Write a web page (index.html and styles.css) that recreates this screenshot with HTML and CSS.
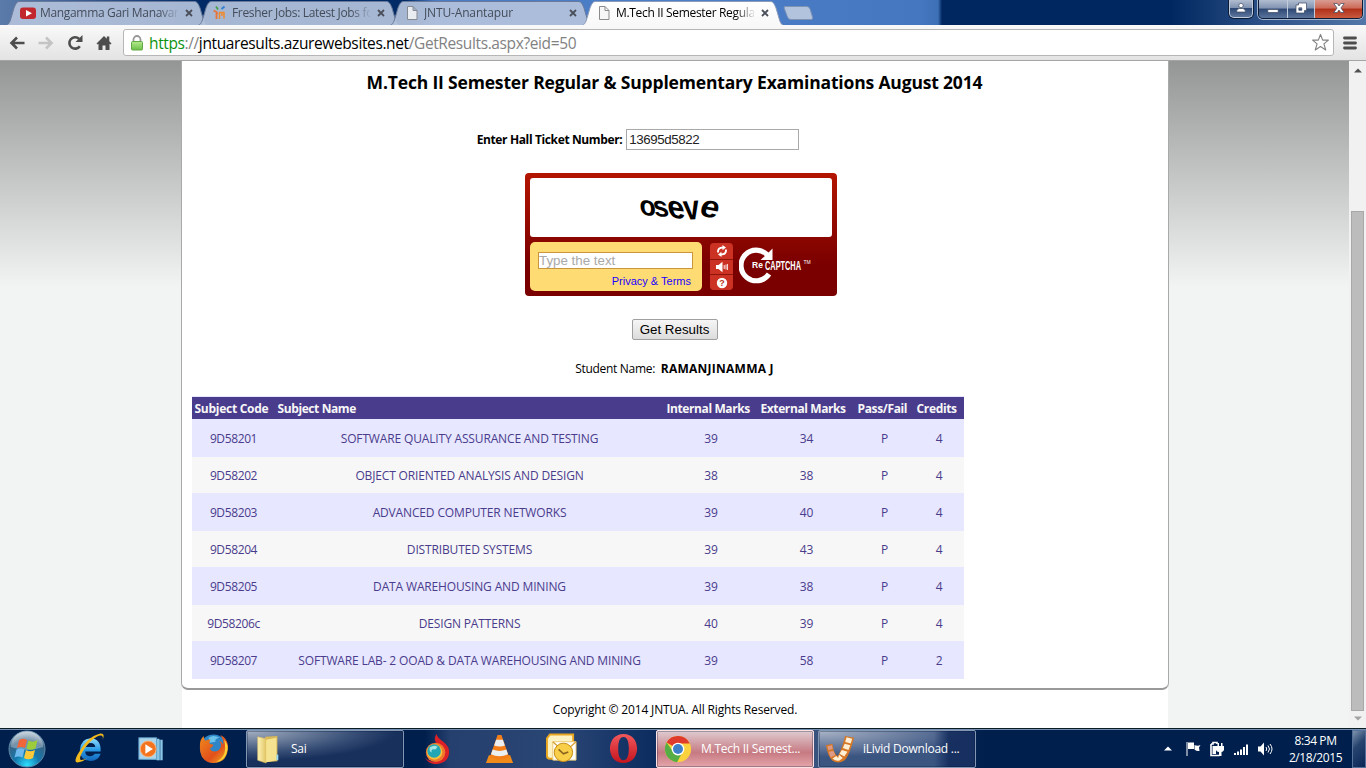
FILE: index.html
```
<!DOCTYPE html>
<html lang="en">
<head>
<meta charset="utf-8">
<title>M.Tech II Semester Regular &amp; Supplementary Examinations August 2014</title>
<link rel="stylesheet" href="styles.css">
</head>
<body>
<svg width="0" height="0" class="defs">
  <defs>
    <linearGradient id="tabOn" x1="0" y1="0" x2="0" y2="1"><stop offset="0" stop-color="#fff"/><stop offset="1" stop-color="#f8f8f8"/></linearGradient>
    <linearGradient id="lockG" x1="0" y1="0" x2="0" y2="1"><stop offset="0" stop-color="#b5ea8c"/><stop offset="1" stop-color="#6cc04a"/></linearGradient>
    <radialGradient id="orb" cx=".5" cy=".95" r=".9"><stop offset="0" stop-color="#2ee0ff"/><stop offset=".4" stop-color="#1377ad"/><stop offset=".75" stop-color="#3a6484"/><stop offset="1" stop-color="#a9bccb"/></radialGradient>
    <linearGradient id="blueE" x1="0" y1="0" x2="0" y2="1"><stop offset="0" stop-color="#8fdcfb"/><stop offset=".5" stop-color="#2b9be6"/><stop offset="1" stop-color="#1266bb"/></linearGradient>
    <linearGradient id="fold" x1="0" y1="0" x2="1" y2="0"><stop offset="0" stop-color="#fdf3b4"/><stop offset="1" stop-color="#e2c566"/></linearGradient>
    <linearGradient id="fox" x1="0" y1="0" x2="1" y2="1"><stop offset="0" stop-color="#f08a1d"/><stop offset=".6" stop-color="#e2501b"/><stop offset="1" stop-color="#f6b521"/></linearGradient>
    <linearGradient id="op" x1="0" y1="0" x2="0" y2="1"><stop offset="0" stop-color="#f0585c"/><stop offset="1" stop-color="#c5141d"/></linearGradient>
  </defs>
</svg>

<header class="tabstrip">
  <div class="tab">
    <svg class="tab-shape" viewBox="0 0 201 25"><path d="M0.5 25C4 24 4 21 8 8C10 3 11 1.500 14 1.500H188C191 1.500 192 3 194 8C198 21 198 24 201 25"/></svg>
    <svg class="fav" viewBox="0 0 16 16"><rect y="2.500" width="16" height="11.500" rx="3" fill="#c1272d"/><path d="M6 5l6 3.200L6 11.500z" fill="#fff"/></svg>
    <span class="tab-title">Mangamma Gari Manavar</span>
    <svg class="tab-x" viewBox="0 0 8 8"><path d="M1 1l6 6M7 1L1 7"/></svg>
  </div>
  <div class="tab">
    <svg class="tab-shape" viewBox="0 0 201 25"><path d="M0.5 25C4 24 4 21 8 8C10 3 11 1.500 14 1.500H188C191 1.500 192 3 194 8C198 21 198 24 201 25"/></svg>
    <svg class="fav" viewBox="0 0 16 16" fill="none" stroke-width="1.800"><path d="M1.500 5.500l3 1.500v7M5 8.500l1-.5" stroke="#e8743b"/><path d="M4 1.500l2 3" stroke="#4aa14a"/><path d="M7 7.500h5v6M7.500 7v7M10 7v4" stroke="#f08b2d" stroke-width="1.500"/><path d="M9.500 4l3-2.500" stroke="#2f7fd0"/></svg>
    <span class="tab-title">Fresher Jobs: Latest Jobs fo</span>
    <svg class="tab-x" viewBox="0 0 8 8"><path d="M1 1l6 6M7 1L1 7"/></svg>
  </div>
  <div class="tab">
    <svg class="tab-shape" viewBox="0 0 201 25"><path d="M0.5 25C4 24 4 21 8 8C10 3 11 1.500 14 1.500H188C191 1.500 192 3 194 8C198 21 198 24 201 25"/></svg>
    <svg class="fav" viewBox="0 0 16 16"><path d="M3.500 1.500h5.500l4 4v9H3.500zM9 1.500v4h4" fill="#e9ecf1" stroke="#868b93"/></svg>
    <span class="tab-title t-wide">JNTU-Anantapur</span>
    <svg class="tab-x" viewBox="0 0 8 8"><path d="M1 1l6 6M7 1L1 7"/></svg>
  </div>
  <div class="tab tab-on">
    <svg class="tab-shape" viewBox="0 0 201 25"><path d="M0.5 25C4 24 4 21 8 8C10 3 11 1.500 14 1.500H188C191 1.500 192 3 194 8C198 21 198 24 201 25"/></svg>
    <svg class="fav" viewBox="0 0 16 16"><path d="M3.500 1.500h5.500l4 4v9H3.500zM9 1.500v4h4" fill="#f6f6f6" stroke="#8b8b8b"/></svg>
    <span class="tab-title">M.Tech II Semester Regula</span>
    <svg class="tab-x" viewBox="0 0 8 8"><path d="M1 1l6 6M7 1L1 7"/></svg>
  </div>
  <svg class="newtab" viewBox="0 0 32 16"><path d="M3 1.500h22q2 0 3 2.500l2.500 8q.7 2.500-1.500 2.500H9q-2.500 0-3.500-2.500L2.500 4q-1-2.500.5-2.500z" fill="#b2c3de" stroke="#7f93b5"/></svg>
  <div class="win">
    <span class="wbtn wuser"><svg viewBox="0 0 12 12"><circle cx="6" cy="3.500" r="2.200"/><path d="M1.500 10q0-3.500 3-3.500h3q3 0 3 3.500z"/></svg></span>
    <div class="wgroup">
      <span class="wbtn wmin"><svg viewBox="0 0 12 12"><path d="M.8 7.500h10.400v3H.8z"/></svg></span>
      <span class="wbtn wmax"><svg viewBox="0 0 12 12"><path fill-rule="evenodd" d="M3.500 1h8v7.500h-2V11H1V3h2.500zM3.800 5.800v2.500h3V5.800z"/></svg></span>
      <span class="wbtn wclose"><svg viewBox="0 0 12 12"><path d="M.8 1.500h3.400L6 4l1.800-2.500h3.400L7.900 6l3.300 4.500H7.800L6 8l-1.800 2.500H.8L4.100 6z"/></svg></span>
    </div>
  </div>
</header>

<nav class="toolbar">
  <svg class="nav-i" viewBox="0 0 16 16"><path d="M8 2.500L2.500 8 8 13.500M3 8h12.500" fill="none" stroke="#4d4d4d" stroke-width="2.600"/></svg>
  <svg class="nav-i" viewBox="0 0 16 16"><path d="M8 2.500L13.500 8 8 13.500M13 8H.5" fill="none" stroke="#c4c4c4" stroke-width="2.600"/></svg>
  <svg class="nav-i" viewBox="0 0 16 16"><path d="M12.800 11.200A5.700 5.700 0 1 1 12 3.800" fill="none" stroke="#4d4d4d" stroke-width="2.600"/><path d="M15.500 0v7H8.500z" fill="#4d4d4d"/></svg>
  <svg class="nav-i" viewBox="0 0 16 16"><path d="M8 1l2.800 2.800V1.500h2.500v4.800L15.500 8.500l-1 1L13.500 8.700V15H9.500v-4.500h-3V15h-4V8.700l-1 .8-1-1z" fill="#4d4d4d"/></svg>
  <div class="omni">
    <svg class="lock" viewBox="0 0 12 16"><path d="M2.500 7V4.500a3.500 3.500 0 0 1 7 0V7" fill="none" stroke="#989898" stroke-width="1.800"/><rect x=".5" y="6.500" width="11" height="8.500" rx="1" fill="url(#lockG)" stroke="#63a847"/></svg>
    <span class="url"><span class="u-s">https</span><span class="u-g">://</span><span class="u-h">jntuaresults.azurewebsites.net</span><span class="u-g">/GetResults.aspx?eid=50</span></span>
    <svg class="star" viewBox="0 0 20 20"><path d="M10 1.500l2.300 6h6l-4.700 4 1.900 6.300L10 14.300l-5.500 3.500 1.900-6.300-4.700-4h6z" fill="#fff" stroke="#828282" stroke-width="1.200" stroke-linejoin="round"/></svg>
  </div>
  <svg class="menu" viewBox="0 0 14 14"><path d="M1.500 2h11M1.500 7h11M1.500 12h11" stroke="#4d4d4d" stroke-width="2.800" stroke-linecap="round"/></svg>
</nav>

<div class="view">
  <main class="page">
    <section class="card">
      <h1>M.Tech II Semester Regular &amp; Supplementary Examinations August 2014</h1>
      <form class="form">
        <div class="ticket"><label for="ht">Enter Hall Ticket Number:</label><input id="ht" type="text" value="13695d5822"></div>
        <div class="captcha">
          <div class="cap-img">
            <svg width="96" height="40" viewBox="0 0 96 40"><g class="cap-word"><text transform="translate(7 26) rotate(10) skewX(14) scale(1.050 1.050)">o</text><text transform="translate(22 28) rotate(4) skewX(16) scale(1.050 1.100)">s</text><text transform="translate(36 29) rotate(8) skewX(18) scale(1.200 1.200)">e</text><text transform="translate(52 32) rotate(-4) skewX(4) scale(1.100 1.350)">v</text><text transform="translate(65 27) rotate(12) skewX(-6) scale(1.300 1.200)">e</text></g></svg>
          </div>
          <div class="cap-row">
            <div class="cap-box"><input type="text" placeholder="Type the text"><a>Privacy &amp; Terms</a></div>
            <div class="cap-btns">
              <span><svg viewBox="0 0 12 12" fill="none" stroke="#fff" stroke-width="1.900"><path d="M2 7.500Q1.500 2.500 7 2.500M10 4.500Q10.500 9.500 5 9.500"/><path d="M6.500 0v5.200L10 2.500zM5.500 6.800V12L2 9.500z" fill="#fff" stroke="none"/></svg></span>
              <span><svg viewBox="0 0 12 12"><path d="M0 4h2.500L6.500.8v10.400L2.500 8H0z" fill="#fff"/><path d="M8.200 4v4M10 3.500v5M11.600 3v6" stroke="#fff" stroke-width=".9"/></svg></span>
              <span><svg viewBox="0 0 12 12"><circle cx="6" cy="6" r="5.200" fill="#fff"/><text x="6" y="9.300" class="q">?</text></svg></span>
            </div>
            <svg class="cap-logo" viewBox="0 0 74 38"><path d="M28.500 9A15.300 15.300 0 1 0 30 28" fill="none" stroke="#fff" stroke-width="5.200"/><path d="M33.500 2.500v11.500H21.500L27 9z" fill="#fff"/><text x="13" y="22" class="re">Re</text><text x="26" y="24" class="cp" textLength="36" lengthAdjust="spacingAndGlyphs">CAPTCHA</text><text x="64.500" y="18" class="tm">TM</text></svg>
          </div>
        </div>
        <button type="button" class="get">Get Results</button>
      </form>
      <p class="student">Student Name: <b>RAMANJINAMMA J</b></p>
      <table class="marks">
        <colgroup><col class="c1"><col class="c2"><col class="c3"><col class="c4"><col class="c5"><col class="c6"></colgroup>
        <thead><tr><th>Subject Code</th><th>Subject Name</th><th>Internal Marks</th><th>External Marks</th><th>Pass/Fail</th><th>Credits</th></tr></thead>
        <tbody>
          <tr><td>9D58201</td><td>SOFTWARE QUALITY ASSURANCE AND TESTING</td><td>39</td><td>34</td><td>P</td><td>4</td></tr>
          <tr><td>9D58202</td><td>OBJECT ORIENTED ANALYSIS AND DESIGN</td><td>38</td><td>38</td><td>P</td><td>4</td></tr>
          <tr><td>9D58203</td><td>ADVANCED COMPUTER NETWORKS</td><td>39</td><td>40</td><td>P</td><td>4</td></tr>
          <tr><td>9D58204</td><td>DISTRIBUTED SYSTEMS</td><td>39</td><td>43</td><td>P</td><td>4</td></tr>
          <tr><td>9D58205</td><td>DATA WAREHOUSING AND MINING</td><td>39</td><td>38</td><td>P</td><td>4</td></tr>
          <tr><td>9D58206c</td><td>DESIGN PATTERNS</td><td>40</td><td>39</td><td>P</td><td>4</td></tr>
          <tr><td>9D58207</td><td>SOFTWARE LAB- 2 OOAD &amp; DATA WAREHOUSING AND MINING</td><td>39</td><td>58</td><td>P</td><td>2</td></tr>
        </tbody>
      </table>
    </section>
    <footer class="copy">Copyright © 2014 JNTUA. All Rights Reserved.</footer>
  </main>
  <div class="scroll">
    <svg viewBox="0 0 8 5"><path d="M0 4.500L4 .5l4 4z" fill="#505050"/></svg>
    <div class="thumb"></div>
    <svg viewBox="0 0 8 5"><path d="M0 .5h8l-4 4z" fill="#a3a3a3"/></svg>
  </div>
</div>

<footer class="taskbar">
  <div class="pin p-start"><svg viewBox="0 0 38 38"><circle cx="19" cy="19" r="18" fill="url(#orb)" stroke="#5d89a8"/><path d="M3 17A16 16 0 0 1 35 17Q19 23 3 17z" fill="#fff" opacity=".3"/><path d="M11 10q4-2.500 8 0l-2 8q-4-2-8 0z" fill="#f0653a"/><path d="M20.500 10.500q4 2.500 9-.5l-2 8.500q-5 2.500-9 0z" fill="#9ccb3b"/><path d="M8.500 19.500q4-2 8 0l-2 8q-4-2-8 0z" fill="#6fb9ee"/><path d="M18 20q4 2.500 9 0l-2 8q-5 2.500-9 0z" fill="#fdc938"/></svg></div>
  <div class="pin p-ie"><svg viewBox="0 0 32 32"><path d="M27.500 19H11.500Q12 24 17 24q3 0 4.500-2.500h6Q25 29 17 29 6 28 6 17.500 7 6 17 5.500 28 6 27.500 19zM11.700 14.500H22Q21.500 10.500 17 10.300 12.500 10.500 11.700 14.500z" fill="url(#blueE)"/><path d="M7 17C0 27 0 32 6 30q4-1 8-4.500C6 30 4 28 9 19 15 9 25 1 29 3q2 1.500-.5 6C32 3 31 0 26.500.7 18 2.500 11 10 7 17z" fill="#f2b91d"/></svg></div>
  <div class="pin p-wmp"><svg viewBox="0 0 30 30"><path d="M5 4l20 1v22l-20-1z" fill="#4d97c4"/><path d="M21 4h3v23h-3zM25 5h2.500v22H25z" fill="#8cc6e6"/><rect x="2" y="3" width="19" height="23" fill="#a9d4ec" stroke="#5fa0c8"/><circle cx="12" cy="15" r="8.500" fill="#f4731e" stroke="#fbb279"/><path d="M9 10l8 5-8 5z" fill="#fff"/></svg></div>
  <div class="pin p-ff"><svg viewBox="0 0 32 32"><circle cx="16" cy="15.500" r="14" fill="#2e86c8"/><path d="M11 5q5-4 11 0-5 1-4 4l-6 1z" fill="#6bc3ec"/><path d="M2 12Q2 6 6 3q0 4 2 5 3-2 5-1-2 2-1 4l4 1q-1 3-4 4 3 5 9 2 5-4 1-10 3 1 4 4 1-5-3-10 7 3 8 11 0 18-15 18Q1 30 2 12z" fill="url(#fox)"/><path d="M27 7q4 4 3.500 10Q29 28 19 30q9-5 9-14 0-5-1-9z" fill="#fcd337"/></svg></div>
  <div class="task t-sai"><svg class="ti" viewBox="0 0 32 32"><path d="M13 3l13-1v27l-13 1z" fill="#d9b957"/><path d="M5 3l9 2v26l-9-3z" fill="url(#fold)" stroke="#d8bc62" stroke-width=".6"/><path d="M14 6l11-2v24l-11 2z" fill="#f6e391"/><path d="M26 22v6" stroke="#9bdcf2" stroke-width="2"/></svg><span>Sai</span></div>
  <div class="pin p-torch"><svg viewBox="0 0 32 32"><path d="M15 1q-3 4-1 8 3 4 7 7 3 10-6 13-7 2-12-4 4 8 13 7 12-2 12-13 0-5-6-10-6-4-7-8z" fill="#dc2027"/><circle cx="14" cy="20" r="10" fill="#f0782b"/><circle cx="13" cy="19.500" r="8" fill="#f8c13a"/><circle cx="12.500" cy="18.500" r="7" fill="#23a7b5"/><path d="M8 15q4-3 8-1-1 3-3 3-4-1-3 3-3-1-2-5z" fill="#a4e4e3"/></svg></div>
  <div class="pin p-vlc"><svg viewBox="0 0 32 32"><path d="M5 23h22l3 8H2z" fill="#f08b1a"/><path d="M14 2h4l8 23q-10 5-20 0z" fill="#f47e18"/><path d="M12.500 7h7l2 6q-5 2-11 0zM9 17q7 3 14 0l1.800 5q-9 4-17.600 0z" fill="#eceff1"/></svg></div>
  <div class="pin p-out"><svg viewBox="0 0 34 32"><path d="M5 1.500h24v25H5q-3 0-3-3v-18z" fill="#fdf2c2" stroke="#e9a720" stroke-width="2"/><path d="M8 9h24v19H8z" fill="#fff" stroke="#eaca75"/><path d="M8 9l12 11L32 9" fill="none" stroke="#d9a53a" stroke-width="1.500"/><circle cx="19" cy="20" r="9.500" fill="#f9cf4a" stroke="#c58b12"/><path d="M14 17l5 4.500 5-2" fill="none" stroke="#8b641d" stroke-width="1.700"/></svg></div>
  <div class="pin p-op"><svg viewBox="0 0 32 32"><path fill-rule="evenodd" d="M16 1C7 1 2 8 2 16s5 15 14 15 14-7 14-15S25 1 16 1zM16 4c4 0 5.500 5 5.500 12S20 28 16 28s-5.500-5-5.500-12S12 4 16 4z" fill="url(#op)"/></svg></div>
  <div class="task t-chrome"><svg class="ti" viewBox="0 0 32 32"><circle cx="16" cy="16" r="14" fill="#fbd13d"/><path d="M16 16L3.900 9A14 14 0 0 1 28.500 10H16z" fill="#df3a2c"/><path d="M3.900 9A14 14 0 0 0 15 30l6-11-9.500 1z" fill="#57ad45"/><circle cx="16" cy="16" r="6.800" fill="#fff"/><circle cx="16" cy="16" r="5.300" fill="#3d80c8"/></svg><span>M.Tech II Semest...</span></div>
  <div class="task t-ilivid"><svg class="ti" viewBox="0 0 32 32"><path d="M1 12l7-1.500q1 10 5 13 1.500-.5 3-4.500 3-7 5.500-17L31 4Q26 23 21 28 14 32.500 8 28.500 3 24 1 12z" fill="#d67725"/><path d="M2.500 13l5-1 .7 4-4.700 1zM4 19l5-1 2 4.500L6 25z" fill="#dd9a86"/><path d="M23 3.500l6 1.500-1.500 5-6-1.500zM21 10.500l6 1.500-2 5-6-2zM18 17l6 2-3.500 5-5-3zM8 26l4-2.500 2 2 1-3.500 4 3.500-4 3q-4 .5-7-2.500z" fill="#fff0d5"/></svg><span>iLivid Download ...</span></div>
  <div class="tray">
    <svg class="up" viewBox="0 0 8 5"><path d="M0 4.500L4 .5l4 4z"/></svg>
    <svg viewBox="0 0 16 16"><path d="M1.500 1h1v14h-1zM3 1.500h6v6.500H3zM9.500 4q3 1.500 6 0l-1.500 2.500.5 3.500q-3 .5-5-1.500z"/></svg>
    <svg viewBox="0 0 16 16"><path d="M2 3v11.500h8.500M2 3h2V1.500h4V3" fill="none" stroke="#fff" stroke-width="1.600"/><path d="M3.500 5h3.500v8H3.500zM8.500 2H10v3h2V2h1.500v3H15v4q-1 2-2.500 2v4H10v-4Q7.500 11 7 9V5h1.500z"/></svg>
    <svg viewBox="0 0 16 16"><path d="M1 12h2v2H1zM4 10.500h2V14H4zM7 8.500h2V14H7zM10 6h2v8h-2zM13 3.500h2V14h-2z"/></svg>
    <svg viewBox="0 0 16 16"><path d="M1 5.500h2.500L7 1.500v13L3.500 10.500H1z"/><path d="M9 6q1.500 2 0 4M11 4.500q3 3.500 0 7M13 3q4 5 0 10" fill="none" stroke="#fff"/></svg>
  </div>
  <div class="clock"><span>8:34 PM</span><span>2/18/2015</span></div>
  <div class="desk"></div>
</footer>
</body>
</html>
```
FILE: styles.css
```
* { box-sizing: border-box; }
body {
  margin: 0; width: 1366px; height: 768px; overflow: hidden;
  display: flex; flex-direction: column;
  font-family: "Open Sans", "Noto Sans", sans-serif; font-size: 12px; color: #000;
}
svg { display: block; flex: none; }
.defs { position: absolute; }

.tabstrip {
  height: 25px; flex: none; display: flex; padding-left: 6px;
  background: linear-gradient(90deg, #5b7baa 0, #45669b 60px, #24477f 130px, #012a66 200px, #012a66 405px, #4a7bc4 435px, #4c7ec9 700px, #4577c0 920px, #3e70b8 938px, #00275f 942px, #00275f 1170px, #2b4f87 1260px, #5377a8 1366px);
}
.tab { width: 201px; height: 25px; flex: none; margin-right: -9px; position: relative; display: flex; align-items: center; padding: 1px 0 0 14px; }
.tab-shape { position: absolute; left: 0; top: 0; width: 201px; height: 25px; fill: #b3c2dc; fill-opacity: .93; stroke: #69799a; }
.tab-on { z-index: 1; }
.tab-on .tab-shape { fill: url(#tabOn); fill-opacity: 1; stroke: #8b9bb8; }
.fav { position: relative; width: 16px; height: 16px; }
.tab-title {
  position: relative; margin-left: 4px; width: 138px; overflow: hidden; white-space: nowrap; line-height: 18px; color: #444c5a; letter-spacing: -.33px;
  -webkit-mask-image: linear-gradient(90deg, #000 119px, transparent 140px); mask-image: linear-gradient(90deg, #000 119px, transparent 140px);
}
.t-wide { letter-spacing: -.15px; }
.tab-on .tab-title { color: #000; }
.tab-x { position: relative; width: 8px; height: 8px; margin-left: 7px; fill: none; stroke: #4a4f59; stroke-width: 1.8; }
.newtab { width: 32px; height: 16px; margin: 5px 0 0 8px; }
.win { margin-left: auto; margin-right: 3px; display: flex; gap: 5px; height: 19px; }
.wgroup { display: flex; border: 1px solid #0b1c38; border-top: 0; border-radius: 0 0 5px 5px; overflow: hidden; box-shadow: 0 0 0 1px #a3b4cd; }
.wbtn { height: 18px; display: flex; align-items: center; justify-content: center; padding-bottom: 2px; border-right: 1px solid #c0cbdc; background: linear-gradient(#b1bdd0 0, #8193b1 45%, #2d4874 50%, #5b759d 100%); }
.wbtn svg { width: 12px; height: 12px; fill: #fff; stroke: #3b4863; stroke-width: .7; }
.wuser { width: 24px; border: 1px solid #c0cbdc; border-top: 0; border-radius: 0 0 5px 5px; box-shadow: 0 0 0 1px #0b1c38; }
.wmin { width: 29px; } .wmax { width: 27px; }
.wclose { width: 47px; border: 0; background: linear-gradient(#d99c92 0, #cc6a58 45%, #b0301a 50%, #c95a3e 100%); }

.toolbar { height: 36px; flex: none; display: flex; align-items: center; padding: 0 9px; background: linear-gradient(#f9f9f9, #e3e3e3); border-bottom: 1px solid #a5a5a5; }
.nav-i { width: 16px; height: 16px; margin-right: 13px; }
.omni { display: flex; align-items: center; flex: 1; height: 27px; margin-left: -2px; margin-right: 9px; padding: 0 3px 0 7px; border: 1px solid #b6b6b6; border-radius: 3px; background: #fff; }
.lock { width: 12px; height: 16px; }
.url { margin-left: 6px; font-size: 15.500px; letter-spacing: -.38px; white-space: nowrap; flex: 1; }
.u-s { color: #0b9310; } .u-g { color: #828282; }
.star { width: 19px; height: 19px; }
.menu { width: 14px; height: 14px; }

.view { height: 667px; flex: none; display: flex; background: #f2f4f3 linear-gradient(#949695, #f2f4f3) 0 0 / 100% 226px no-repeat; }
.page { width: 986px; margin: 0 auto 0 182px; background: #fff; }
.card { height: 629px; background: #fff; border: 1px solid #a9a9a9; border-top: 0; border-bottom: 2px solid #999; border-radius: 0 0 7px 7px; margin: 0 -1px; padding: 9px 11px 0 10px; }
h1 { margin: 0; font-size: 17.500px; line-height: 24px; font-weight: 700; text-align: center; white-space: nowrap; letter-spacing: -.17px; }
.form { display: flex; flex-direction: column; align-items: center; }
.ticket { display: flex; align-items: center; gap: 4px; margin-top: 35px; margin-right: 73px; font-weight: 700; }
.ticket label { white-space: nowrap; letter-spacing: -.37px; }
.ticket input { width: 173px; height: 21px; padding: 0 2px; border: 1px solid #a9a9a9; font: 13.333px "Liberation Sans", Arial, sans-serif; letter-spacing: -.42px; color: #222; }
.captcha { width: 312px; height: 123px; margin: 23px 0 0 13px; padding: 5px; border-radius: 4px; background: linear-gradient(#b31500, #7a0000 75%); }
.cap-img { height: 59px; background: #fff; border-radius: 3px; display: flex; justify-content: center; align-items: center; }
.cap-word { font: 700 26px "Liberation Sans", Arial, sans-serif; }
.cap-row { display: flex; margin-top: 5px; }
.cap-box { width: 172px; height: 49px; padding: 10px 9px 0 8px; border-radius: 5px; background: #ffdc73; font-family: "Liberation Sans", Arial, sans-serif; }
.cap-box input { display: block; width: 155px; height: 17px; padding: 0; border: 1px solid #ca963d; background: #fff; font: 13.333px "Liberation Sans", Arial, sans-serif; }
.cap-box input::placeholder { color: #a9a9a9; }
.cap-box a { display: block; margin: 5px 2px 0 0; text-align: right; font-size: 11px; line-height: 14px; color: #1a00ff; }
.cap-btns { width: 23px; height: 47px; margin: 1px 0 0 8px; border-radius: 4px; overflow: hidden; display: grid; grid-template-rows: 15.500px 14.500px 15px; gap: 1px; background: #8c1409; }
.cap-btns span { background: #cb3223; display: flex; align-items: center; justify-content: center; }
.cap-btns svg { width: 12px; height: 12px; }
.q { font: 700 9px "Liberation Sans", sans-serif; text-anchor: middle; fill: #b32; }
.cap-logo { width: 74px; height: 38px; margin: 4px 0 0 6px; fill: #fff; }
.re { font: 700 8.500px "Liberation Sans", sans-serif; }
.cp { font: 700 12.500px "Liberation Sans Narrow", "Liberation Sans", sans-serif; }
.tm { font: 5px "Liberation Sans", sans-serif; }
.get { width: 86px; height: 21px; margin-top: 23px; padding: 0; border: 1px solid #a0a0a0; border-radius: 2px; background: linear-gradient(#f6f6f6, #dcdcdc); font: 13.333px "Liberation Sans", Arial, sans-serif; color: #000; }
.student { margin: 19px 0 0; line-height: 20px; text-align: center; letter-spacing: -.3px; }
.student b { margin-left: 3px; letter-spacing: .25px; }
.marks { width: 772px; margin-top: 17px; table-layout: fixed; border-collapse: collapse; border-top: 1px solid #e7e7ff; }
.c1 { width: 83px; } .c2 { width: 389px; } .c3 { width: 94px; } .c4 { width: 97px; } .c5 { width: 59px; } .c6 { width: 50px; }
.marks th { height: 22px; padding: 2px 0 0 2.500px; text-align: left; background: #4a3c8c; color: #f7f7f7; white-space: nowrap; line-height: 20px; letter-spacing: -.4px; }
.marks th:first-child { letter-spacing: -.27px; }
.marks th:nth-child(5), .marks th:nth-child(6) { letter-spacing: -.35px; }
.marks td { height: 36px; padding: 2px 0 0; text-align: center; color: #4a3c8c; background: #f7f7f7; white-space: nowrap; line-height: 20px; letter-spacing: -.15px; }
.marks td:first-child { letter-spacing: -.38px; }
.marks tbody tr:nth-child(odd) td { height: 38px; background: #e7e7ff; }
.copy { text-align: center; line-height: 20px; padding-top: 10px; letter-spacing: -.16px; }
.scroll { width: 17px; flex: none; background: #f1f1f1; display: flex; flex-direction: column; align-items: center; padding: 7px 0; }
.scroll svg { width: 8px; height: 5px; }
.thumb { width: 13px; height: 500px; margin: auto 0 5px; background: #bcbcbc; border: 1px solid #a8a8a8; }

.taskbar {
  height: 40px; flex: none; display: flex; align-items: center; position: relative; color: #fff;
  border-top: 1px solid #0d1b24;
  box-shadow: inset 0 1px #7390b0;
  background: linear-gradient(90deg, #001f4d 0, #001f4d 425px, #253f6e 450px, #2a4675 560px, #0c2c5f 655px, #3a537e 815px, #001f4d 985px, #001f4d 100%);
}
.pin { flex: none; display: flex; justify-content: center; }
.p-start { width: 54px; } .p-start svg { width: 38px; height: 38px; }
.p-ie { width: 71px; } .p-ie svg, .p-ff svg, .p-torch svg, .p-vlc svg, .p-op svg { width: 31px; height: 31px; }
.p-wmp { width: 51px; } .p-wmp svg { width: 28px; height: 28px; }
.p-ff { width: 70px; padding-left: 4px; }
.p-torch { width: 66px; } .p-vlc { width: 58px; }
.p-out { width: 66px; } .p-out svg { width: 33px; height: 31px; }
.p-op { width: 59px; padding-right: 1px; }
.task { width: 158px; height: 38px; flex: none; display: flex; align-items: center; padding-left: 6px; border: 1px solid #8396b2; border-radius: 2px; box-shadow: inset 0 0 0 1px rgba(0, 20, 60, .3); white-space: nowrap; letter-spacing: -.25px; }
.ti { width: 30px; height: 30px; margin-right: 8px; }
.t-sai { background: radial-gradient(ellipse 150px 30px at 0 0, #a5b0c2, rgba(120, 140, 170, .35) 70%, transparent), #17305c; }
.t-chrome { margin-left: 3px; border-color: #ffe1e1; background: linear-gradient(rgba(230, 228, 232, .75), rgba(190, 90, 100, .25) 60%, rgba(255, 200, 200, .5)), #c9848c; }
.t-ilivid { margin-left: 4px; background: linear-gradient(90deg, transparent 115px, rgba(10, 35, 85, .75) 130px), radial-gradient(ellipse 150px 26px at 0 0, #aab4c6, rgba(130, 145, 175, .4) 75%, transparent), #3b5581; }
.tray { margin-left: auto; display: flex; align-items: center; gap: 8px; fill: #fff; }
.tray svg { width: 16px; height: 16px; }
.tray .up { width: 8px; height: 5px; margin-right: 5px; }
.clock { width: 73px; margin-left: 6px; display: flex; flex-direction: column; align-items: center; line-height: 17px; letter-spacing: -.4px; }
.desk { width: 14px; height: 38px; border: 1px solid #55719a; background: linear-gradient(135deg, #7f93ae, #27446f 40%, #0a2555); }
```
